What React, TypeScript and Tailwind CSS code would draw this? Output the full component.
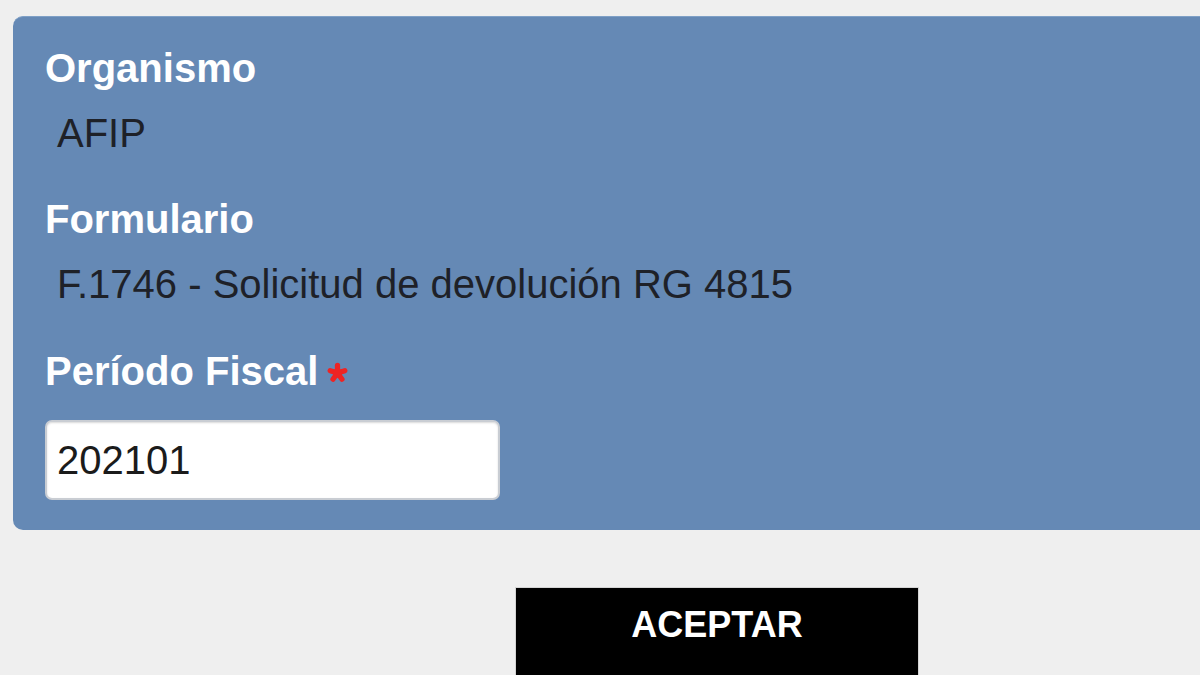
import { useState } from 'react';

function RequiredMark() {
  // five rounded petals, like the red star in the reference
  const petals = [0, 72, 144, 216, 288];
  return (
    <svg viewBox="0 0 20 20" className="w-[21px] h-[21px] ml-[9px] mt-[2px]" aria-hidden>
      <g stroke="#ee2424" strokeWidth="5" strokeLinecap="round">
        {petals.map(a => (
          <line key={a} x1="10" y1="10.5" x2="10" y2="3.2" transform={`rotate(${a} 10 10.5)`} />
        ))}
      </g>
      <circle cx="10" cy="10.5" r="4.5" fill="#ee2424" />
    </svg>
  );
}

export default function App() {
  const [periodo, setPeriodo] = useState('202101');

  return (
    <div
      className="w-[1200px] h-[675px] overflow-hidden bg-[#efefef] pt-[16px] pl-[13px]"
      style={{ fontFamily: '"Liberation Sans", Arial, sans-serif' }}
    >
      {/* Form panel */}
      <div className="w-[1210px] rounded-[10px] bg-[#6589b5] border-t border-[#7fa0c6] pl-[32px] pt-[28px] pb-[30px]">
        <div className="text-[40px] leading-[46px] font-bold text-white">Organismo</div>
        <div className="text-[40px] leading-[46px] text-[#1e2128] pl-[12px] mt-[19px]">AFIP</div>

        <div className="text-[40px] leading-[46px] font-bold text-white mt-[40px]">Formulario</div>
        <div className="text-[40px] leading-[46px] text-[#1e2128] pl-[12px] mt-[19px]">
          F.1746 - Solicitud de devolución RG 4815
        </div>

        <div className="flex items-center mt-[41px]">
          <span className="text-[40px] leading-[46px] font-bold text-white">Período Fiscal</span>
          <RequiredMark />
        </div>

        <input
          value={periodo}
          onChange={e => setPeriodo(e.target.value)}
          className="mt-[26px] block w-[455px] h-[80px] bg-white rounded-[7px] border-2 border-[#c9cdd3] px-[10px] text-[40px] text-[#1b1b1b] outline-none shadow-[inset_0_1px_2px_rgba(0,0,0,0.15)]"
        />
      </div>

      {/* Actions */}
      <div className="pl-[502px] pt-[57px]">
        <button className="w-[404px] h-[110px] bg-black border border-[#d4d4d4] text-white font-bold text-[36px] leading-[42px] pt-[16px] flex justify-center items-start">
          ACEPTAR
        </button>
      </div>
    </div>
  );
}
